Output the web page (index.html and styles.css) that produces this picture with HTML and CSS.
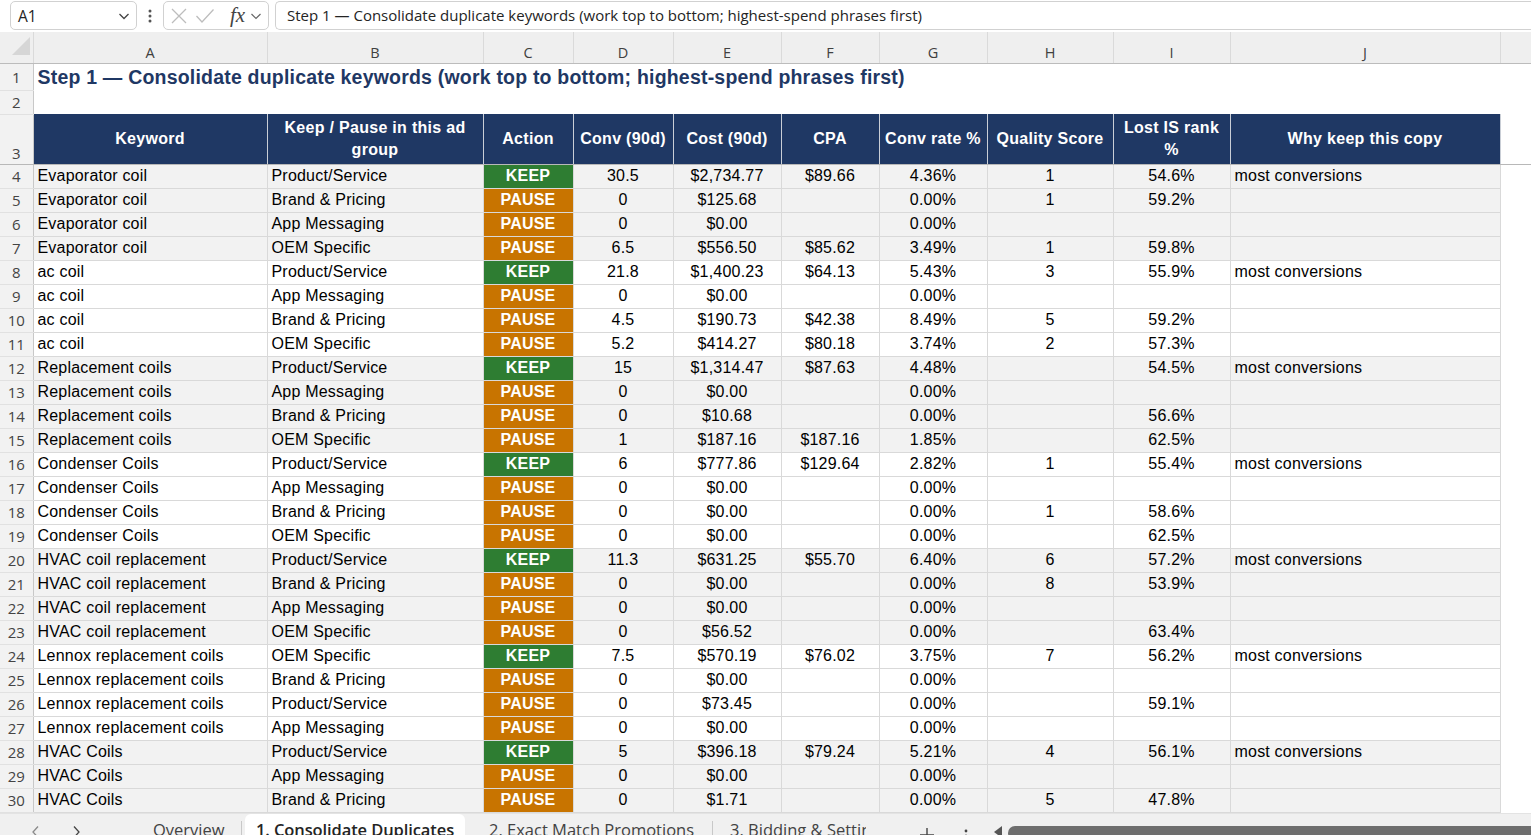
FILE: index.html
```html
<!DOCTYPE html>
<html>
<head>
	<meta charset="utf-8">
	<title>1. Consolidate Duplicates</title>
	<link rel="stylesheet" href="styles.css">
</head>
<body>
<div class="app">
	<!-- formula bar -->
	<div class="fbar">
		<div class="namebox">
			<span>A1</span>
			<svg class="chev" width="12" height="8" viewBox="0 0 12 8"><polyline points="1.5,2 6,6.5 10.5,2" fill="none" stroke="#444" stroke-width="1.3"/></svg>
		</div>
		<div class="vdots">
			<svg width="4" height="14" viewBox="0 0 4 14"><circle cx="2" cy="2" r="1.5" fill="#555"/><circle cx="2" cy="7" r="1.5" fill="#555"/><circle cx="2" cy="12" r="1.5" fill="#555"/></svg>
		</div>
		<div class="fxbox">
			<svg width="18" height="18" viewBox="0 0 18 18"><path d="M2 2 L16 16 M16 2 L2 16" stroke="#bdbdbd" stroke-width="1.3" fill="none"/></svg>
			<svg width="20" height="18" viewBox="0 0 20 18"><polyline points="1.5,9 7,15 18.5,2.5" stroke="#bdbdbd" stroke-width="1.3" fill="none"/></svg>
			<span class="fx">fx</span>
			<svg width="12" height="8" viewBox="0 0 12 8"><polyline points="1.5,2 6,6.5 10.5,2" fill="none" stroke="#666" stroke-width="1.2"/></svg>
		</div>
		<div class="finput">Step 1 — Consolidate duplicate keywords (work top to bottom; highest-spend phrases first)</div>
	</div>

	<!-- grid -->
	<table class="sheet">
		<colgroup>
			<col style="width:33px"><col style="width:234px"><col style="width:216px"><col style="width:90px">
			<col style="width:100px"><col style="width:108px"><col style="width:98px"><col style="width:108px">
			<col style="width:126px"><col style="width:117px"><col style="width:270px"><col style="width:31px">
		</colgroup>
		<tr class="colhdr">
			<th class="corner"><svg width="18" height="18" viewBox="0 0 18 18"><polygon points="18,0 18,18 0,18" fill="#d6d6d6"/></svg></th>
			<th>A</th><th>B</th><th>C</th><th>D</th><th>E</th><th>F</th><th>G</th><th>H</th><th>I</th><th>J</th><th class="last"></th>
		</tr>
		<tr class="r1">
			<td class="rh">1</td><td class="title" colspan="10">Step 1 — Consolidate duplicate keywords (work top to bottom; highest-spend phrases first)</td><td></td>
		</tr>
		<tr class="r2">
			<td class="rh">2</td><td colspan="11"></td>
		</tr>
		<tr class="r3">
			<td class="rh">3</td>
			<td class="h">Keyword</td><td class="h">Keep / Pause in this ad group</td><td class="h">Action</td>
			<td class="h">Conv (90d)</td><td class="h">Cost (90d)</td><td class="h">CPA</td><td class="h">Conv rate %</td>
			<td class="h">Quality Score</td><td class="h">Lost IS rank %</td><td class="h">Why keep this copy</td><td class="fill"></td>
		</tr>
		<tr class="g"><td class="rh">4</td><td>Evaporator coil</td><td>Product/Service</td><td class="keep">KEEP</td><td class="n">30.5</td><td class="n">$2,734.77</td><td class="n">$89.66</td><td class="n">4.36%</td><td class="n">1</td><td class="n">54.6%</td><td>most conversions</td><td class="out"></td></tr>
		<tr class="g"><td class="rh">5</td><td>Evaporator coil</td><td>Brand &amp; Pricing</td><td class="pause">PAUSE</td><td class="n">0</td><td class="n">$125.68</td><td class="n"></td><td class="n">0.00%</td><td class="n">1</td><td class="n">59.2%</td><td></td><td class="out"></td></tr>
		<tr class="g"><td class="rh">6</td><td>Evaporator coil</td><td>App Messaging</td><td class="pause">PAUSE</td><td class="n">0</td><td class="n">$0.00</td><td class="n"></td><td class="n">0.00%</td><td class="n"></td><td class="n"></td><td></td><td class="out"></td></tr>
		<tr class="g"><td class="rh">7</td><td>Evaporator coil</td><td>OEM Specific</td><td class="pause">PAUSE</td><td class="n">6.5</td><td class="n">$556.50</td><td class="n">$85.62</td><td class="n">3.49%</td><td class="n">1</td><td class="n">59.8%</td><td></td><td class="out"></td></tr>
		<tr class="w"><td class="rh">8</td><td>ac coil</td><td>Product/Service</td><td class="keep">KEEP</td><td class="n">21.8</td><td class="n">$1,400.23</td><td class="n">$64.13</td><td class="n">5.43%</td><td class="n">3</td><td class="n">55.9%</td><td>most conversions</td><td class="out"></td></tr>
		<tr class="w"><td class="rh">9</td><td>ac coil</td><td>App Messaging</td><td class="pause">PAUSE</td><td class="n">0</td><td class="n">$0.00</td><td class="n"></td><td class="n">0.00%</td><td class="n"></td><td class="n"></td><td></td><td class="out"></td></tr>
		<tr class="w"><td class="rh">10</td><td>ac coil</td><td>Brand &amp; Pricing</td><td class="pause">PAUSE</td><td class="n">4.5</td><td class="n">$190.73</td><td class="n">$42.38</td><td class="n">8.49%</td><td class="n">5</td><td class="n">59.2%</td><td></td><td class="out"></td></tr>
		<tr class="w"><td class="rh">11</td><td>ac coil</td><td>OEM Specific</td><td class="pause">PAUSE</td><td class="n">5.2</td><td class="n">$414.27</td><td class="n">$80.18</td><td class="n">3.74%</td><td class="n">2</td><td class="n">57.3%</td><td></td><td class="out"></td></tr>
		<tr class="g"><td class="rh">12</td><td>Replacement coils</td><td>Product/Service</td><td class="keep">KEEP</td><td class="n">15</td><td class="n">$1,314.47</td><td class="n">$87.63</td><td class="n">4.48%</td><td class="n"></td><td class="n">54.5%</td><td>most conversions</td><td class="out"></td></tr>
		<tr class="g"><td class="rh">13</td><td>Replacement coils</td><td>App Messaging</td><td class="pause">PAUSE</td><td class="n">0</td><td class="n">$0.00</td><td class="n"></td><td class="n">0.00%</td><td class="n"></td><td class="n"></td><td></td><td class="out"></td></tr>
		<tr class="g"><td class="rh">14</td><td>Replacement coils</td><td>Brand &amp; Pricing</td><td class="pause">PAUSE</td><td class="n">0</td><td class="n">$10.68</td><td class="n"></td><td class="n">0.00%</td><td class="n"></td><td class="n">56.6%</td><td></td><td class="out"></td></tr>
		<tr class="g"><td class="rh">15</td><td>Replacement coils</td><td>OEM Specific</td><td class="pause">PAUSE</td><td class="n">1</td><td class="n">$187.16</td><td class="n">$187.16</td><td class="n">1.85%</td><td class="n"></td><td class="n">62.5%</td><td></td><td class="out"></td></tr>
		<tr class="w"><td class="rh">16</td><td>Condenser Coils</td><td>Product/Service</td><td class="keep">KEEP</td><td class="n">6</td><td class="n">$777.86</td><td class="n">$129.64</td><td class="n">2.82%</td><td class="n">1</td><td class="n">55.4%</td><td>most conversions</td><td class="out"></td></tr>
		<tr class="w"><td class="rh">17</td><td>Condenser Coils</td><td>App Messaging</td><td class="pause">PAUSE</td><td class="n">0</td><td class="n">$0.00</td><td class="n"></td><td class="n">0.00%</td><td class="n"></td><td class="n"></td><td></td><td class="out"></td></tr>
		<tr class="w"><td class="rh">18</td><td>Condenser Coils</td><td>Brand &amp; Pricing</td><td class="pause">PAUSE</td><td class="n">0</td><td class="n">$0.00</td><td class="n"></td><td class="n">0.00%</td><td class="n">1</td><td class="n">58.6%</td><td></td><td class="out"></td></tr>
		<tr class="w"><td class="rh">19</td><td>Condenser Coils</td><td>OEM Specific</td><td class="pause">PAUSE</td><td class="n">0</td><td class="n">$0.00</td><td class="n"></td><td class="n">0.00%</td><td class="n"></td><td class="n">62.5%</td><td></td><td class="out"></td></tr>
		<tr class="g"><td class="rh">20</td><td>HVAC coil replacement</td><td>Product/Service</td><td class="keep">KEEP</td><td class="n">11.3</td><td class="n">$631.25</td><td class="n">$55.70</td><td class="n">6.40%</td><td class="n">6</td><td class="n">57.2%</td><td>most conversions</td><td class="out"></td></tr>
		<tr class="g"><td class="rh">21</td><td>HVAC coil replacement</td><td>Brand &amp; Pricing</td><td class="pause">PAUSE</td><td class="n">0</td><td class="n">$0.00</td><td class="n"></td><td class="n">0.00%</td><td class="n">8</td><td class="n">53.9%</td><td></td><td class="out"></td></tr>
		<tr class="g"><td class="rh">22</td><td>HVAC coil replacement</td><td>App Messaging</td><td class="pause">PAUSE</td><td class="n">0</td><td class="n">$0.00</td><td class="n"></td><td class="n">0.00%</td><td class="n"></td><td class="n"></td><td></td><td class="out"></td></tr>
		<tr class="g"><td class="rh">23</td><td>HVAC coil replacement</td><td>OEM Specific</td><td class="pause">PAUSE</td><td class="n">0</td><td class="n">$56.52</td><td class="n"></td><td class="n">0.00%</td><td class="n"></td><td class="n">63.4%</td><td></td><td class="out"></td></tr>
		<tr class="w"><td class="rh">24</td><td>Lennox replacement coils</td><td>OEM Specific</td><td class="keep">KEEP</td><td class="n">7.5</td><td class="n">$570.19</td><td class="n">$76.02</td><td class="n">3.75%</td><td class="n">7</td><td class="n">56.2%</td><td>most conversions</td><td class="out"></td></tr>
		<tr class="w"><td class="rh">25</td><td>Lennox replacement coils</td><td>Brand &amp; Pricing</td><td class="pause">PAUSE</td><td class="n">0</td><td class="n">$0.00</td><td class="n"></td><td class="n">0.00%</td><td class="n"></td><td class="n"></td><td></td><td class="out"></td></tr>
		<tr class="w"><td class="rh">26</td><td>Lennox replacement coils</td><td>Product/Service</td><td class="pause">PAUSE</td><td class="n">0</td><td class="n">$73.45</td><td class="n"></td><td class="n">0.00%</td><td class="n"></td><td class="n">59.1%</td><td></td><td class="out"></td></tr>
		<tr class="w"><td class="rh">27</td><td>Lennox replacement coils</td><td>App Messaging</td><td class="pause">PAUSE</td><td class="n">0</td><td class="n">$0.00</td><td class="n"></td><td class="n">0.00%</td><td class="n"></td><td class="n"></td><td></td><td class="out"></td></tr>
		<tr class="g"><td class="rh">28</td><td>HVAC Coils</td><td>Product/Service</td><td class="keep">KEEP</td><td class="n">5</td><td class="n">$396.18</td><td class="n">$79.24</td><td class="n">5.21%</td><td class="n">4</td><td class="n">56.1%</td><td>most conversions</td><td class="out"></td></tr>
		<tr class="g"><td class="rh">29</td><td>HVAC Coils</td><td>App Messaging</td><td class="pause">PAUSE</td><td class="n">0</td><td class="n">$0.00</td><td class="n"></td><td class="n">0.00%</td><td class="n"></td><td class="n"></td><td></td><td class="out"></td></tr>
		<tr class="g"><td class="rh">30</td><td>HVAC Coils</td><td>Brand &amp; Pricing</td><td class="pause">PAUSE</td><td class="n">0</td><td class="n">$1.71</td><td class="n"></td><td class="n">0.00%</td><td class="n">5</td><td class="n">47.8%</td><td></td><td class="out"></td></tr>
	</table>

	<!-- sheet tabs -->
	<div class="tabbar">
		<div class="nav">
			<svg width="10" height="14" viewBox="0 0 10 14"><polyline points="7,1.5 2,7 7,12.5" fill="none" stroke="#8a8a8a" stroke-width="1.3"/></svg>
			<svg width="10" height="14" viewBox="0 0 10 14"><polyline points="3,1.5 8,7 3,12.5" fill="none" stroke="#444" stroke-width="1.3"/></svg>
		</div>
		<div class="tab t-ov">Overview</div>
		<div class="sep"></div>
		<div class="tab active">1. Consolidate Duplicates</div>
		<div class="tab t-em">2. Exact Match Promotions</div>
		<div class="sep"></div>
		<div class="tab t-bid">3. Bidding &amp; Settings</div>
		<div class="more">
			<svg width="14" height="4" viewBox="0 0 14 4"><circle cx="2" cy="2" r="1.6" fill="#444"/><circle cx="7" cy="2" r="1.6" fill="#444"/><circle cx="12" cy="2" r="1.6" fill="#444"/></svg>
		</div>
		<div class="plus">
			<svg width="16" height="16" viewBox="0 0 16 16"><path d="M8 1 V15 M1 8 H15" stroke="#444" stroke-width="1.4"/></svg>
		</div>
		<div class="kebab">
			<svg width="4" height="14" viewBox="0 0 4 14"><circle cx="2" cy="2" r="1.4" fill="#444"/><circle cx="2" cy="7" r="1.4" fill="#444"/><circle cx="2" cy="12" r="1.4" fill="#444"/></svg>
		</div>
		<div class="hscroll">
			<svg width="10" height="12" viewBox="0 0 10 12"><polygon points="9,0 9,12 1,6" fill="#555"/></svg>
			<div class="thumb"></div>
		</div>
	</div>
</div>
</body>
</html>
```

FILE: styles.css
```css
*{
	margin: 0;
	padding: 0;
	box-sizing: border-box;
}
body{
	background: #fff;
	font-family: "Liberation Sans", Arial, sans-serif;
}
.app{
	width: 1531px;
	height: 835px;
	overflow: hidden;
	display: flex;
	flex-direction: column;
}

/* formula bar */
.fbar{
	height: 32px;
	flex: none;
	display: flex;
	align-items: flex-start;
	padding-top: 1px;
	padding-left: 10px;
	font-family: "Open Sans", "Noto Sans", sans-serif;
	color: #242424;
}
.namebox{
	width: 127px;
	height: 29px;
	border: 1px solid #d1d1d1;
	border-radius: 5px;
	display: flex;
	align-items: center;
	justify-content: space-between;
	padding: 0 6px 0 7px;
	font-size: 15.5px;
}
.vdots{
	width: 26px;
	height: 29px;
	display: flex;
	align-items: center;
	justify-content: center;
}
.fxbox{
	width: 106px;
	height: 29px;
	border: 1px solid #d1d1d1;
	border-radius: 5px;
	display: flex;
	align-items: center;
	gap: 7px;
	padding-left: 6px;
}
.fxbox .fx{
	font-family: "Liberation Serif", "DejaVu Serif", serif;
	font-style: italic;
	font-size: 21px;
	color: #444;
	margin-left: 8px;
	margin-right: -2px;
}
.finput{
	flex: 1;
	height: 29px;
	margin-left: 6px;
	border: 1px solid #d1d1d1;
	border-right: none;
	border-radius: 5px 0 0 5px;
	padding-left: 11px;
	line-height: 27px;
	font-size: 15px;
	white-space: nowrap;
}

/* sheet grid */
.sheet{
	border-collapse: collapse;
	table-layout: fixed;
	width: 1531px;
	flex: none;
}
.sheet td{
	padding: 0 4px;
	font-size: 16px;
	letter-spacing: 0.2px;
	color: #000;
	white-space: nowrap;
	overflow: hidden;
	border: 1px solid #d9d9d9;
	height: 24px;
	line-height: 22px;
}
.colhdr th{
	height: 31px;
	background: #efefef;
	border-right: 1px solid #dadada;
	border-bottom: 1px solid #bcbcbc;
	font-family: "Open Sans", "Noto Sans", sans-serif;
	font-weight: normal;
	font-size: 14.5px;
	color: #404040;
	vertical-align: bottom;
	padding-bottom: 1px;
}
.colhdr th.corner{
	text-align: right;
	vertical-align: bottom;
	padding: 0 3px 4px 0;
}
.colhdr th.last{
	border-right: none;
}
.sheet td.rh{
	background: #f2f2f2;
	border: none;
	border-bottom: 1px solid #e1e1e1;
	border-right: 1px solid #c8c8c8;
	font-family: "Open Sans", "Noto Sans", sans-serif;
	font-size: 15px;
	letter-spacing: 0;
	color: #444;
	text-align: center;
	padding: 0;
}
.r1 td, .r2 td{
	border: none;
}
.r1 td{
	height: 27px;
}
.sheet td.title{
	font-weight: bold;
	font-size: 19.5px;
	letter-spacing: 0.2px;
	color: #1f3864;
	padding-left: 4px;
	overflow: visible;
}
.r3 td{
	height: 50px;
}
.r3 td.rh{
	vertical-align: bottom;
	line-height: 22px;
	border-bottom: 1px solid #b8b8b8;
}
.sheet td.h{
	background: #1f3864;
	color: #fff;
	font-weight: bold;
	letter-spacing: 0.3px;
	text-align: center;
	white-space: normal;
	border: 1px solid #c9ced6;
	border-bottom: 1px solid #b8b8b8;
	border-top: none;
	padding: 0 5px;
}
.sheet td.fill{
	border: none;
	border-bottom: 1px solid #b8b8b8;
}
.g td{
	background: #f2f2f2;
}
.w td{
	background: #fff;
}
.sheet td.out{
	background: #fff;
	border: none;
	border-left: 1px solid #d9d9d9;
}
.sheet td.n{
	text-align: center;
}
.sheet td.keep, .sheet td.pause{
	color: #fff;
	font-weight: bold;
	text-align: center;
}
.sheet td.keep{
	background: #2e7d32;
}
.sheet td.pause{
	background: #c87400;
}

/* sheet tabs */
.tabbar{
	flex: 1;
	background: #f0f0f0;
	border-top: 1px solid #e3e3e3;
	display: flex;
	align-items: flex-start;
	font-family: "Open Sans", "Noto Sans", sans-serif;
	font-size: 16.5px;
	color: #424242;
	white-space: nowrap;
}
.nav{
	width: 110px;
	flex: none;
	display: flex;
	gap: 30px;
	padding: 11px 0 0 31px;
}
.tab{
	flex: none;
	height: 30px;
	padding-top: 4px;
	line-height: 24px;
	overflow: hidden;
}
.t-ov{
	width: 131px;
	padding-left: 43px;
}
.sep{
	flex: none;
	width: 1px;
	height: 20px;
	margin-top: 7px;
	background: #c8c8c8;
}
.tab.active{
	width: 220px;
	margin-left: 3px;
	background: #fff;
	border-radius: 6px 6px 0 0;
	padding-left: 11px;
	color: #242424;
	font-weight: 600;
	letter-spacing: -0.1px;
}
.t-em{
	width: 247px;
	padding-left: 24px;
}
.t-bid{
	width: 136px;
	margin-left: 17px;
}
.more{
	flex: none;
	width: 40px;
	padding: 16px 0 0 14px;
}
.plus{
	flex: none;
	width: 40px;
	padding: 11px 0 0 13px;
}
.kebab{
	flex: none;
	width: 45px;
	padding: 11px 0 0 18px;
}
.hscroll{
	flex: 1;
	display: flex;
	align-items: flex-start;
	gap: 5px;
	padding: 12px 0 0 2px;
}
.thumb{
	flex: 1;
	height: 14px;
	background: #6e6e6e;
	border-radius: 7px 0 0 7px;
}
```
